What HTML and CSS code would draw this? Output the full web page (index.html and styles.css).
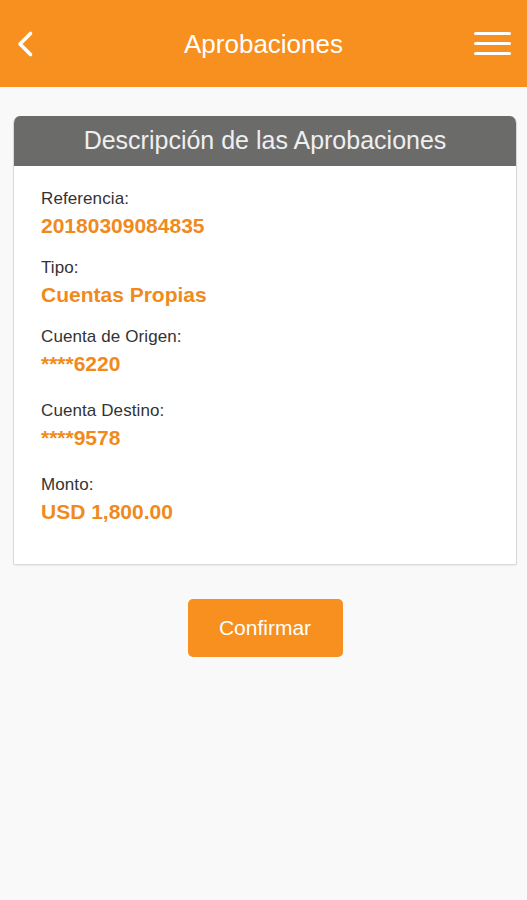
FILE: index.html
```html
<!DOCTYPE html>
<html lang="es">
  <head>
    <meta charset="utf-8" />
    <meta name="viewport" content="width=device-width, initial-scale=1" />
    <link rel="stylesheet" href="styles.css">
    <title>Aprobaciones</title>
  </head>
  <body>
    <header class="topbar">
      <a class="topbar-btn topbar-back" href="#" aria-label="Volver">
        <svg width="18" height="28" viewBox="0 0 18 28">
          <path d="M14.5 3.5 L4 14 L14.5 24.5" fill="none" stroke="#fff" stroke-width="3.6" stroke-linecap="round" stroke-linejoin="round" />
        </svg>
      </a>
      <h1 class="topbar-title">Aprobaciones</h1>
      <a class="topbar-btn topbar-menu" href="#" aria-label="Menú">
        <span></span><span></span><span></span>
      </a>
    </header>

    <main class="content">
      <section class="card">
        <h2 class="card-head">Descripción de las Aprobaciones</h2>
        <dl class="card-body">
          <div class="field">
            <dt>Referencia:</dt>
            <dd>20180309084835</dd>
          </div>
          <div class="field">
            <dt>Tipo:</dt>
            <dd>Cuentas Propias</dd>
          </div>
          <div class="field">
            <dt>Cuenta de Origen:</dt>
            <dd>****6220</dd>
          </div>
          <div class="field field--spaced">
            <dt>Cuenta Destino:</dt>
            <dd>****9578</dd>
          </div>
          <div class="field field--spaced">
            <dt>Monto:</dt>
            <dd>USD 1,800.00</dd>
          </div>
        </dl>
      </section>

      <button class="btn-confirm" type="button">Confirmar</button>
    </main>
  </body>
</html>
```

FILE: styles.css
```css
:root {
  --orange: #f7901e;
  --orange-text: #f08a1c;
  --head-gray: #6b6b6a;
  --card-border: #d9d9d9;
}

* {
  box-sizing: border-box;
}

html {
  font-family: "Liberation Sans", Arial, Helvetica, sans-serif;
  font-size: 16px;
}

body {
  margin: 0;
  background-color: #f9f9f9;
  min-height: 100vh;
}

/* Top bar */
.topbar {
  background-color: var(--orange);
  height: 87px;
  display: flex;
  align-items: center;
  justify-content: space-between;
  padding: 0 16px;

  & .topbar-title {
    margin: 0;
    color: #fff;
    font-size: 26px;
    font-weight: normal;
    flex: 1;
    text-align: center;
    padding-top: 2px;
  }
}

.topbar-btn {
  display: flex;
  align-items: center;
  justify-content: center;
  width: 38px;
  height: 30px;
}

.topbar-back {
  justify-content: flex-start;
}

.topbar-menu {
  flex-direction: column;
  gap: 7px;

  & span {
    display: block;
    width: 37px;
    height: 3px;
    border-radius: 2px;
    background-color: #fff;
  }
}

/* Content */
.content {
  padding: 29px 10px 0 13px;
  display: flex;
  flex-direction: column;
  align-items: center;
}

.card {
  width: 100%;
  background-color: #fff;
  border: 1px solid var(--card-border);
  border-top: 0;
  border-radius: 7px 7px 2px 2px;
  box-shadow: 0 1px 2px rgba(0, 0, 0, 0.06);
  overflow: hidden;
}

.card-head {
  margin: 0;
  height: 50px;
  background-color: var(--head-gray);
  color: #efefef;
  font-size: 25px;
  font-weight: normal;
  display: flex;
  align-items: center;
  justify-content: center;
  padding-bottom: 1px;
}

.card-body {
  margin: 0;
  padding: 23px 27px 41px;
  display: flex;
  flex-direction: column;
  gap: 21px;
}

.field {
  & dt {
    color: #333;
    font-size: 17px;
    letter-spacing: 0.1px;
    line-height: 20px;
  }

  & dd {
    margin: 5px 0 0;
    color: var(--orange-text);
    font-size: 21px;
    font-weight: bold;
    line-height: 23px;
  }
}

.field--spaced {
  margin-top: 5px;
}

.btn-confirm {
  margin-top: 34px;
  width: 155px;
  height: 58px;
  border: 0;
  border-radius: 5px;
  background-color: var(--orange);
  color: #fff;
  font-family: inherit;
  font-size: 21px;
  cursor: pointer;
  padding-bottom: 2px;
}
```
